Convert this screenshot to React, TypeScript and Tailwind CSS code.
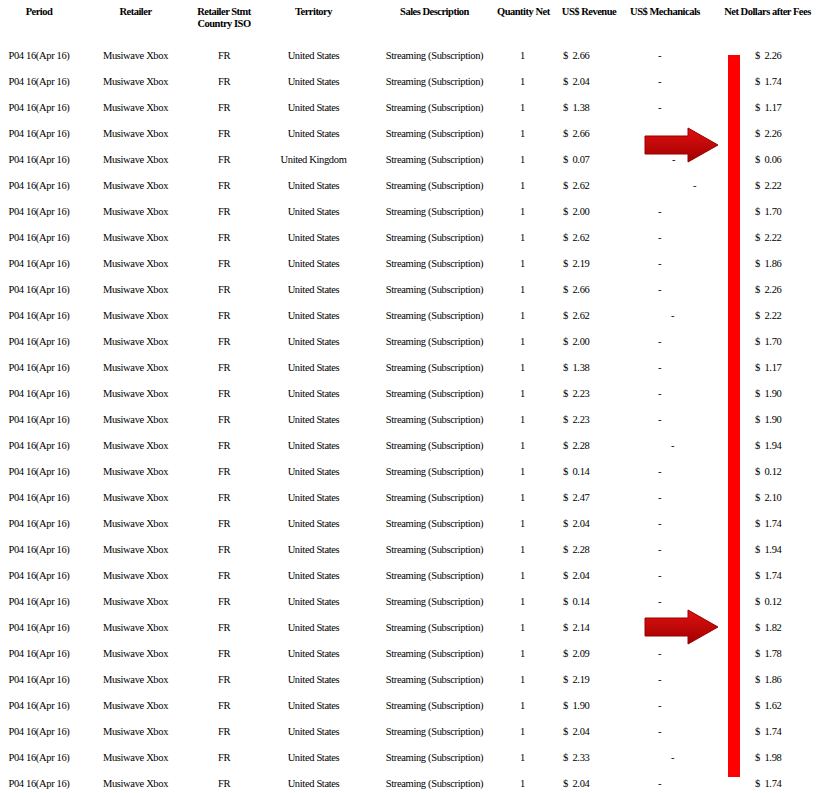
const rows: [string, string, string, number | null][] = [
  ["United States", "2.66", "2.26", 658],
  ["United States", "2.04", "1.74", 658],
  ["United States", "1.38", "1.17", 658],
  ["United States", "2.66", "2.26", null],
  ["United Kingdom", "0.07", "0.06", 672],
  ["United States", "2.62", "2.22", 693],
  ["United States", "2.00", "1.70", 658],
  ["United States", "2.62", "2.22", 658],
  ["United States", "2.19", "1.86", 658],
  ["United States", "2.66", "2.26", 658],
  ["United States", "2.62", "2.22", 671],
  ["United States", "2.00", "1.70", 658],
  ["United States", "1.38", "1.17", 658],
  ["United States", "2.23", "1.90", 658],
  ["United States", "2.23", "1.90", 658],
  ["United States", "2.28", "1.94", 671],
  ["United States", "0.14", "0.12", 658],
  ["United States", "2.47", "2.10", 658],
  ["United States", "2.04", "1.74", 658],
  ["United States", "2.28", "1.94", 658],
  ["United States", "2.04", "1.74", 658],
  ["United States", "0.14", "0.12", 658],
  ["United States", "2.14", "1.82", null],
  ["United States", "2.09", "1.78", 658],
  ["United States", "2.19", "1.86", 658],
  ["United States", "1.90", "1.62", 658],
  ["United States", "2.04", "1.74", 658],
  ["United States", "2.33", "1.98", 671],
  ["United States", "2.04", "1.74", 658],
];

const cols = "grid grid-cols-[78px_115px_62px_117px_125px_51px_82px_70px_129px]";

function Arrow({ top }: { top: number }) {
  return (
    <svg className="absolute" style={{ left: 644, top }} width="76" height="36" viewBox="0 0 76 36">
      <defs>
        <linearGradient id={`g${top}`} x1="0" y1="0" x2="0" y2="1">
          <stop offset="0" stopColor="#e01010" />
          <stop offset="1" stopColor="#a00000" />
        </linearGradient>
      </defs>
      <path d="M1 9 H44 V1 L74 18 L44 35 V27 H1 Z" fill={`url(#g${top})`} stroke="#900" strokeWidth="1" />
    </svg>
  );
}

export default function App() {
  return (
    <div className="relative w-[829px] h-[793px] bg-white overflow-hidden text-[10.5px] tracking-[-0.35px] text-black" style={{ fontFamily: '"Liberation Serif", serif' }}>
      <div className={`${cols} h-[43px] font-bold text-center leading-[12px] pt-[6px] whitespace-nowrap tracking-[-0.5px]`}>
        <div>Period</div>
        <div>Retailer</div>
        <div>Retailer Stmt<br />Country ISO</div>
        <div>Territory</div>
        <div>Sales Description</div>
        <div>Quantity Net</div>
        <div>US$ Revenue</div>
        <div>US$ Mechanicals</div>
        <div className="pl-[6px]">Net Dollars after Fees</div>
      </div>
      {rows.map(([terr, rev, net, dash], i) => (
        <div key={i} className={`${cols} h-[26px] items-center whitespace-nowrap`}>
          <div className="text-center">P04 16(Apr 16)</div>
          <div className="text-center">Musiwave Xbox</div>
          <div className="text-center">FR</div>
          <div className="text-center">{terr}</div>
          <div className="text-center">Streaming (Subscription)</div>
          <div className="text-center">1</div>
          <div className="pl-[15px]">$&nbsp; {rev}</div>
          <div className="relative h-full">
            {dash !== null && (
              <span className="absolute top-[5px]" style={{ left: dash - 630 }}>-</span>
            )}
          </div>
          <div className="pl-[55px]">$&nbsp; {net}</div>
        </div>
      ))}
      <div className="absolute left-[728px] top-[55px] w-[12px] h-[722px] bg-[#ff0000]" />
      <Arrow top={127} />
      <Arrow top={609} />
    </div>
  );
}
